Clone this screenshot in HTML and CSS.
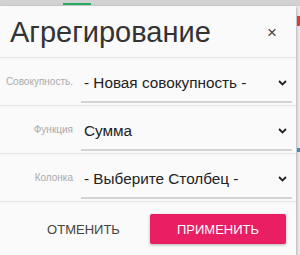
FILE: index.html
```html
<!DOCTYPE html>
<html lang="ru">
<head>
    <meta charset="UTF-8">
    <title>Агрегирование</title>
    <link rel="stylesheet" href="styles.css">
</head>
<body>
    <div class="topbar"><div class="tab"></div></div>
    <div class="page">
        <div class="modal">
            <div class="modal-header">
                <h1>Агрегирование</h1>
                <span class="close">&times;</span>
            </div>

            <div class="row">
                <label>Совокупность.</label>
                <div class="select">
                    <span>- Новая совокупность -</span>
                    <svg class="chev" width="9" height="6" viewBox="0 0 9 6"><path d="M1 1l3.5 3.5L8 1" fill="none" stroke="#222" stroke-width="1.8"/></svg>
                </div>
            </div>
            <div class="row">
                <label>Функция</label>
                <div class="select">
                    <span>Сумма</span>
                    <svg class="chev" width="9" height="6" viewBox="0 0 9 6"><path d="M1 1l3.5 3.5L8 1" fill="none" stroke="#222" stroke-width="1.8"/></svg>
                </div>
            </div>
            <div class="row">
                <label>Колонка</label>
                <div class="select">
                    <span>- Выберите Столбец -</span>
                    <svg class="chev" width="9" height="6" viewBox="0 0 9 6"><path d="M1 1l3.5 3.5L8 1" fill="none" stroke="#222" stroke-width="1.8"/></svg>
                </div>
            </div>

            <div class="modal-footer">
                <button class="btn-cancel">Отменить</button>
                <button class="btn-apply">Применить</button>
            </div>
        </div>
        <div class="side">
            <div class="mark red"></div>
            <div class="mark blue"></div>
        </div>
    </div>
</body>
</html>
```

FILE: styles.css
```css
body {
    font-family: "Liberation Sans", Arial, sans-serif;
    background-color: #eeeeee;
    margin: 0;
    padding: 0;
    overflow: hidden;
}
.topbar {
    height: 6px;
    background-color: #d2d2d2;
    padding-top: 3px;
    box-sizing: border-box;
}
.tab {
    margin-left: 63px;
    width: 28px;
    height: 2px;
    background-color: #27ae60;
}
.page {
    display: flex;
}
.modal {
    width: 296px;
    flex: none;
    background-color: #fafafa;
    box-shadow: 1px 1px 3px rgba(0, 0, 0, 0.25);
    height: 260px;
}
.modal-header {
    height: 52px;
    display: flex;
    align-items: center;
    justify-content: space-between;
    padding: 2px 19px 0 10px;
    border-bottom: 1px solid #e5e5e5;
    box-sizing: border-box;
}
.modal-header h1 {
    margin: 0;
    font-size: 29px;
    font-weight: normal;
    color: #333;
}
.close {
    font-size: 17px;
    color: #444;
}
.row {
    height: 48px;
    display: grid;
    grid-template-columns: 73px 211px;
    column-gap: 8px;
    align-items: start;
    border-bottom: 1px solid #e5e5e5;
    box-sizing: border-box;
}
.row label {
    margin-top: 18px;
    text-align: right;
    font-size: 10px;
    line-height: 12px;
    color: #aaa;
}
.select {
    margin-top: 16px;
    display: flex;
    align-items: flex-start;
    justify-content: space-between;
    padding: 0 5px 9px 3px;
    border-bottom: 2px solid #d4d4d4;
    font-size: 15.3px;
    line-height: 18px;
    color: #222;
}
.chev {
    margin-top: 6px;
}
.modal-footer {
    display: flex;
    align-items: center;
    padding: 12px 0 0 27px;
}
.btn-cancel {
    flex: none;
    width: 113px;
    height: 30px;
    border: none;
    background: none;
    font-family: inherit;
    font-size: 13px;
    text-transform: uppercase;
    color: #444;
}
.btn-apply {
    flex: none;
    margin-left: 10px;
    width: 136px;
    height: 30px;
    border: none;
    border-radius: 2px;
    background-color: #e91e63;
    color: #fff;
    font-family: inherit;
    font-size: 13px;
    text-transform: uppercase;
    box-shadow: 0 1px 3px rgba(0, 0, 0, 0.3);
}
.side {
    flex: 1;
    position: relative;
}
.mark {
    position: absolute;
    left: 1px;
    width: 3px;
}
.red {
    top: 10px;
    height: 10px;
    background-color: #e53935;
}
.blue {
    top: 142px;
    height: 4px;
    background-color: #3b8fd0;
}
```
